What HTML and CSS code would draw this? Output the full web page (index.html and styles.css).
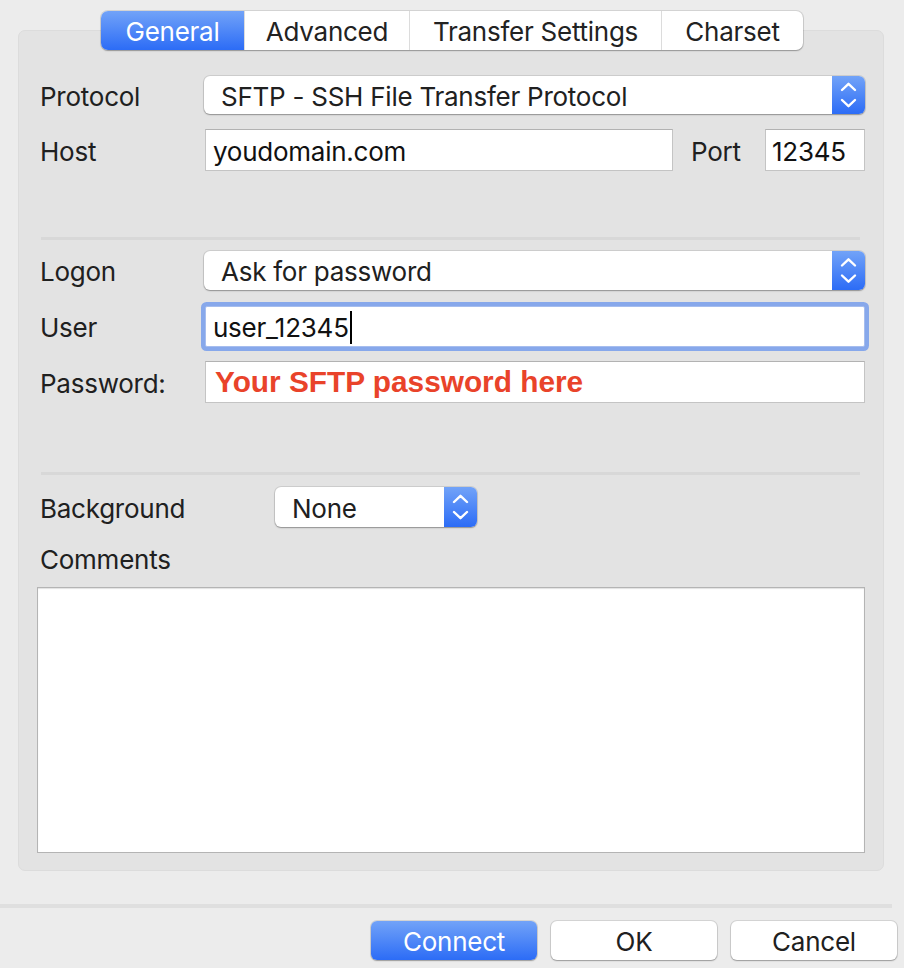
FILE: index.html
```html
<!DOCTYPE html>
<html>
<head>
<meta charset="utf-8">
<link rel="stylesheet" href="styles.css">
</head>
<body>
<div class="tabview">
  <div class="tabs">
    <div class="tab active tab-general">General</div>
    <div class="tab tab-advanced">Advanced</div>
    <div class="tab tab-transfer">Transfer Settings</div>
    <div class="tab tab-charset">Charset</div>
  </div>
  <div class="panel">
    <div class="row row-protocol">
      <div class="label">Protocol</div>
      <div class="select select-wide">
        <span class="select-text">SFTP - SSH File Transfer Protocol</span>
        <span class="stepper">
          <svg width="33" height="38" viewBox="0 0 33 38"><path d="M10 14 L16.5 7.8 L23 14 M10 24 L16.5 30.2 L23 24" fill="none" stroke="#fff" stroke-width="2.4" stroke-linecap="round" stroke-linejoin="round"/></svg>
        </span>
      </div>
    </div>
    <div class="row row-host">
      <div class="label">Host</div>
      <div class="input input-host">youdomain.com</div>
      <div class="label label-port">Port</div>
      <div class="input input-port">12345</div>
    </div>
    <div class="separator sep-1"></div>
    <div class="row row-logon">
      <div class="label">Logon</div>
      <div class="select select-wide select-logon">
        <span class="select-text">Ask for password</span>
        <span class="stepper">
          <svg width="33" height="39" viewBox="0 0 33 39"><path d="M10 14.5 L16.5 8.3 L23 14.5 M10 24.5 L16.5 30.7 L23 24.5" fill="none" stroke="#fff" stroke-width="2.4" stroke-linecap="round" stroke-linejoin="round"/></svg>
        </span>
      </div>
    </div>
    <div class="row row-user">
      <div class="label">User</div>
      <div class="input input-user focused">user_12345<span class="caret"></span></div>
    </div>
    <div class="row row-password">
      <div class="label">Password:</div>
      <div class="input input-password"><span class="hint">Your SFTP password here</span></div>
    </div>
    <div class="separator sep-2"></div>
    <div class="row row-background">
      <div class="label label-bg">Background</div>
      <div class="select select-bg">
        <span class="select-text">None</span>
        <span class="stepper">
          <svg width="33" height="40" viewBox="0 0 33 40"><path d="M10 15 L16.5 8.8 L23 15 M10 25 L16.5 31.2 L23 25" fill="none" stroke="#fff" stroke-width="2.4" stroke-linecap="round" stroke-linejoin="round"/></svg>
        </span>
      </div>
    </div>
    <div class="comments-label">Comments</div>
    <div class="textarea"></div>
  </div>
</div>
<div class="footer">
  <div class="footer-sep"></div>
  <div class="buttons">
    <div class="button primary">Connect</div>
    <div class="button">OK</div>
    <div class="button">Cancel</div>
  </div>
</div>
</body>
</html>
```

FILE: styles.css
```css
* { box-sizing: border-box; }
html, body {
  margin: 0;
  padding: 0;
  background: #ececec;
  width: 904px;
  height: 968px;
  overflow: hidden;
  font-family: "Inter", "Noto Sans", sans-serif;
  font-size: 26px;
  letter-spacing: -0.25px;
  color: #202020;
}
body { padding-top: 11px; }

.tabview {
  display: flex;
  flex-direction: column;
  align-items: center;
}
.tabs {
  display: flex;
  height: 39px;
  margin-bottom: -20px;
  z-index: 1;
  background: #fff;
  border-radius: 7px;
  box-shadow: 0 0 0 1px rgba(0,0,0,0.10), 0 1px 1.5px rgba(0,0,0,0.28);
}
.tab {
  display: flex;
  align-items: center;
  justify-content: center;
  height: 39px;
  padding-top: 1px;
  border-left: 1px solid #dcdcdc;
  color: #222;
  white-space: nowrap;
}
.tab:first-child { border-left: none; border-radius: 7px 0 0 7px; }
.tab:last-child { border-radius: 0 7px 7px 0; }
.tab.active {
  background: linear-gradient(#72a3f8, #2c6cf6);
  color: #fff;
}
.tab-general { width: 143px; }
.tab-advanced { width: 165px; }
.tab-transfer { width: 252px; }
.tab-charset { width: 142px; }

.panel {
  align-self: stretch;
  margin: 0 20px 0 18px;
  height: 841px;
  background: #e3e3e3;
  border: 1px solid #dcdcdc;
  border-radius: 7px;
  padding: 45px 18px 17px 21px;
  display: flex;
  flex-direction: column;
}

.row {
  display: flex;
  align-items: center;
}
.label {
  width: 164px;
  flex: none;
  white-space: nowrap;
  padding-top: 2px;
}
.label-bg { width: 235px; }

.select {
  display: flex;
  align-items: center;
  background: #fff;
  border-radius: 6px;
  box-shadow: 0 0 0 1px rgba(0,0,0,0.09), 0 1px 1.5px rgba(0,0,0,0.30);
  overflow: hidden;
}
.select-wide { flex: 1; height: 38px; }
.select-logon { height: 39px; }
.select-bg { width: 202px; height: 40px; }
.select-text {
  flex: 1;
  padding-left: 17px;
  padding-top: 2px;
  color: #202020;
  white-space: nowrap;
}
.stepper {
  width: 33px;
  align-self: stretch;
  display: flex;
  align-items: center;
  justify-content: center;
  background: linear-gradient(#72a3f8, #2c6cf6);
}
.stepper svg { display: block; }

.input {
  height: 42px;
  background: #fff;
  border: 1px solid #c4c4c4;
  border-top-color: #b2b2b2;
  display: flex;
  align-items: center;
  padding-left: 7px;
  padding-top: 2px;
  color: #111;
  white-space: nowrap;
}
.input-host { flex: 1; margin-left: 1px; }
.label-port { width: 74px; margin-left: 18px; }
.input-port { width: 100px; padding-left: 6px; }
.input-user { flex: 1; margin-left: 1px; height: 41px; }
.input-password { flex: 1; margin-left: 1px; padding-left: 9px; padding-top: 0; }
.input.focused {
  border: 1px solid #a6bdee;
  border-radius: 2px;
  box-shadow: 0 0 0 4px #87a8eb;
}
.caret {
  display: inline-block;
  width: 2px;
  height: 33px;
  background: #000;
  margin-left: 1px;
}
.hint {
  font-family: "Liberation Sans", Arial, sans-serif;
  font-weight: bold;
  font-size: 29.8px;
  letter-spacing: 0;
  color: #e9432a;
}

.row-protocol { height: 38px; }
.row-host { margin-top: 15px; height: 42px; }
.separator {
  height: 3px;
  background: #d8d8d8;
  margin-left: 1px;
  margin-right: 5px;
}
.sep-1 { margin-top: 66px; }
.row-logon { margin-top: 11px; height: 39px; }
.row-user { margin-top: 16px; height: 41px; }
.row-password { margin-top: 14px; height: 42px; }
.sep-2 { margin-top: 69px; }
.row-background { margin-top: 12px; height: 40px; }
.comments-label {
  margin-top: 16px;
  height: 32px;
  line-height: 34px;
}
.textarea {
  margin-top: 12px;
  margin-left: -3px;
  height: 266px;
  background: #fff;
  border: 1px solid #b4b4b4;
  box-shadow: inset 0 1px 1px rgba(0,0,0,0.12);
}

.footer-sep {
  margin-top: 33px;
  width: 892px;
  height: 4px;
  background: #dfdfdf;
}
.buttons {
  margin-top: 13px;
  display: flex;
  justify-content: flex-end;
  gap: 14px;
  padding-right: 7px;
}
.button {
  width: 166px;
  height: 39px;
  padding-top: 2px;
  border-radius: 6px;
  background: #fff;
  box-shadow: 0 0 0 1px rgba(0,0,0,0.10), 0 1px 1.5px rgba(0,0,0,0.28);
  display: flex;
  align-items: center;
  justify-content: center;
  color: #202020;
}
.button.primary {
  background: linear-gradient(#72a3f8, #2c6cf6);
  color: #fff;
}
```
